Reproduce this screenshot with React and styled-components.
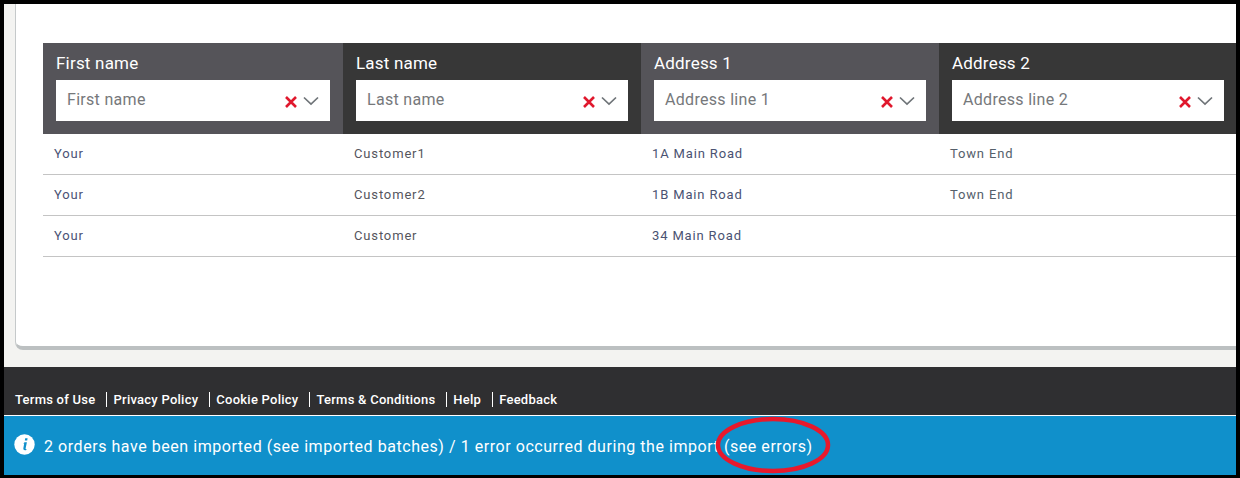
import React from "react";
import styled, { createGlobalStyle } from "styled-components";

const Global = createGlobalStyle`
  html, body { margin: 0; padding: 0; background: #000; }
  body { font-family: "Roboto", "Liberation Sans", sans-serif; }
`;
const Frame = styled.div`
  width: 1240px; height: 478px; box-sizing: border-box;
  padding: 4px 4px 3px; background: #000; overflow: hidden;
`;
const Page = styled.div`
  height: 100%; display: flex; flex-direction: column; background: #f3f3f1; position: relative;
`;
const Content = styled.div`
  height: 363px; box-sizing: border-box; padding: 0 0 17px 11px; flex: none;
`;
const Card = styled.div`
  height: 100%; box-sizing: border-box; background: #fff;
  border-left: 1px solid #c5c9ca; border-bottom: 4px solid #bcc0c1;
  border-bottom-left-radius: 8px; padding: 39px 0 0 27px;
`;
const Table = styled.div`
  display: grid; grid-template-columns: 300px 298px 298px 297px;
`;
const HeadCell = styled.div`
  height: 91px; box-sizing: border-box; background: ${p => (p.$light ? "#555459" : "#373737")};
  color: #fff; padding: 10px ${p => p.$right}px 0 13px;
  font-size: 17px; line-height: 20px; letter-spacing: .2px;
`;
const Filter = styled.div`
  height: 41px; box-sizing: border-box; margin-top: 7px; background: #fff; display: flex; align-items: center;
  padding: 0 11px 2px 11px; color: #76787b; font-size: 16px; letter-spacing: .3px;
`;
const Placeholder = styled.span`flex: 1;`;
const ClearIcon = styled.svg`
  margin: 4px 5px 0 0; flex: none;
`;
const ChevronIcon = styled.svg`
  margin-top: 2px; flex: none;
`;
const Cell = styled.div`
  height: 41px; box-sizing: border-box; border-bottom: 1px solid #c4c4c4;
  padding: 0 0 2px 11px; display: flex; align-items: center;
  font-size: 13px; letter-spacing: .85px; color: ${p => p.$color};
`;
const Footer = styled.div`
  height: 48px; flex: none; box-sizing: border-box; background: #2f2f31; color: #fff;
  display: flex; align-items: flex-end; padding: 0 0 8px 11px; font-size: 13px;
  letter-spacing: .25px; font-weight: 500;
`;
const FooterLink = styled.span`
  line-height: 15px; padding-left: ${p => (p.$first ? 0 : 6)}px; margin-left: ${p => (p.$first ? 0 : 11)}px;
  border-left: ${p => (p.$first ? "none" : "1px solid #fff")};
`;
const Notice = styled.div`
  flex: 1; border-top: 1px solid #fff; background: #1090cb; color: #fff;
  display: flex; align-items: center; gap: 9px; padding: 1px 0 0 10px;
  font-size: 16px; letter-spacing: .55px; position: relative;
`;
const InfoIcon = styled.svg`
  margin-top: -4px; flex: none;
`;
const Ring = styled.svg`
  position: absolute; left: 709px; top: -1px; width: 120px; height: 60px;
`;

const Clear = () => (
  <ClearIcon width="14" height="14" viewBox="0 0 14 14">
    <path d="M2 2 L12 12 M12 2 L2 12" stroke="#e0182d" strokeWidth="2.6" />
  </ClearIcon>
);
const Chevron = () => (
  <ChevronIcon width="16" height="10" viewBox="0 0 16 10">
    <path d="M1 1.5 L8 8 L15 1.5" fill="none" stroke="#6f7478" strokeWidth="1.7" />
  </ChevronIcon>
);
const Info = () => (
  <InfoIcon width="21" height="21" viewBox="0 0 21 21">
    <circle cx="10.5" cy="10.5" r="10.2" fill="#fff" />
    <path d="M11.2 4.2 h2.4 l-.4 2.2 h-2.4z M10.6 8.2 h2.3 l-1.3 6.2 q-.1.7.9.5 l-.2 1.1 q-3.2.7-3-1.4 l.9-5.2 h-1z" fill="#1090cb" />
  </InfoIcon>
);

const cols = [
  { head: "First name", ph: "First name", light: true, right: 13 },
  { head: "Last name", ph: "Last name", right: 13 },
  { head: "Address 1", ph: "Address line 1", light: true, right: 13 },
  { head: "Address 2", ph: "Address line 2", right: 12 },
];
const rows = [
  ["Your", "Customer1", "1A Main Road", "Town End"],
  ["Your", "Customer2", "1B Main Road", "Town End"],
  ["Your", "Customer", "34 Main Road", ""],
];
const tints = ["#4a5275", "#55555d", "#4a5272", "#55606b"];
const links = ["Terms of Use", "Privacy Policy", "Cookie Policy", "Terms & Conditions", "Help", "Feedback"];

export default function App() {
  return (
    <Frame>
      <Global />
      <Page>
        <Content>
          <Card>
            <Table>
              {cols.map(c => (
                <HeadCell key={c.head} $light={c.light} $right={c.right}>
                  {c.head}
                  <Filter>
                    <Placeholder>{c.ph}</Placeholder>
                    <Clear />
                    <Chevron />
                  </Filter>
                </HeadCell>
              ))}
              {rows.flatMap((r, i) =>
                r.map((t, j) => <Cell key={`${i}-${j}`} $color={tints[j]}>{t}</Cell>)
              )}
            </Table>
          </Card>
        </Content>
        <Footer>
          {links.map((t, i) => (
            <FooterLink key={t} $first={i === 0}>{t}</FooterLink>
          ))}
        </Footer>
        <Notice>
          <Info />
          <span>2 orders have been imported (see imported batches) / 1 error occurred during the import (see errors)</span>
          <Ring viewBox="0 0 120 60">
            <ellipse cx="60" cy="30" rx="55" ry="26" fill="none" stroke="#e8192c" strokeWidth="4.5" />
          </Ring>
        </Notice>
      </Page>
    </Frame>
  );
}
